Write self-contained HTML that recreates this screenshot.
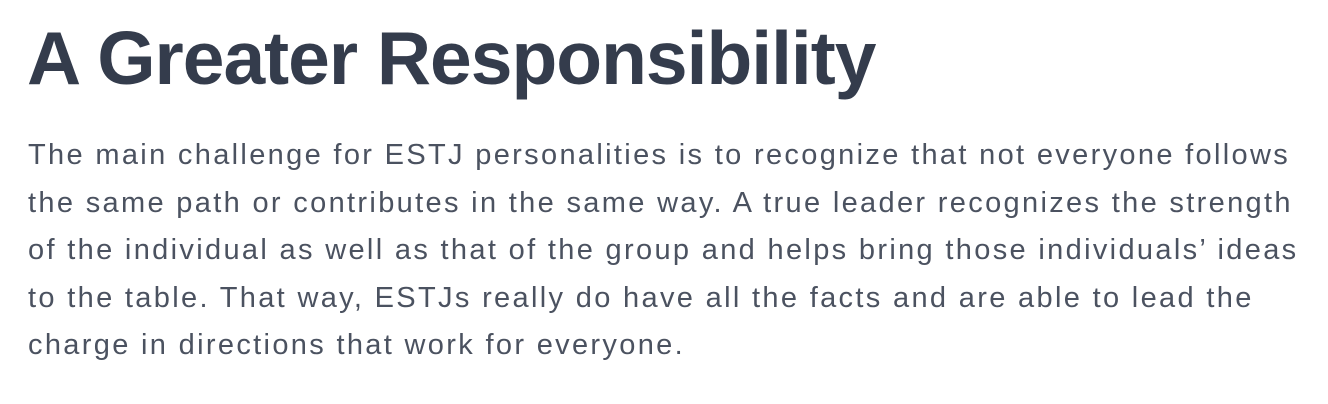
<!DOCTYPE html>
<html><head><style>
html,body{margin:0;padding:0;background:#fff;width:1328px;height:404px;overflow:hidden}
h1{position:absolute;left:27px;top:13px;margin:0;font:bold 75px/90px "Liberation Sans",sans-serif;color:#343c4c;letter-spacing:-1px;white-space:nowrap}
.l{position:absolute;left:28px;font:29px/34px "Liberation Sans",sans-serif;color:#4b5260;white-space:nowrap;letter-spacing:2.33px}
</style></head><body>
<h1>A Greater Responsibility</h1>
<div class="l" style="top:138px">The main challenge for ESTJ personalities is to recognize that not everyone follows</div>
<div class="l" style="top:186px">the same path or contributes in the same way. A true leader recognizes the strength</div>
<div class="l" style="top:233px">of the individual as well as that of the group and helps bring those individuals’ ideas</div>
<div class="l" style="top:281px">to the table. That way, ESTJs really do have all the facts and are able to lead the</div>
<div class="l" style="top:328px">charge in directions that work for everyone.</div>
</body></html>
